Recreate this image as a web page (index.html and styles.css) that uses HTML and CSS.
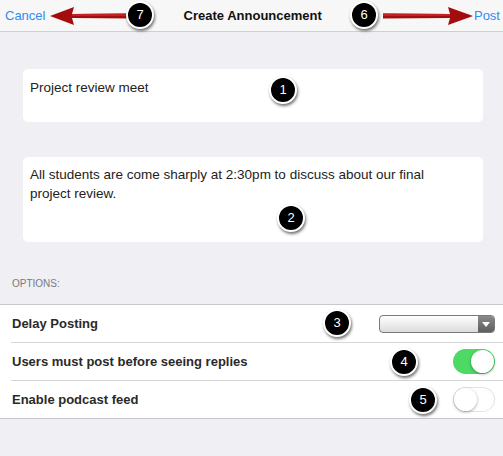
FILE: index.html
```html
<!DOCTYPE html>
<html>
<head>
<meta charset="utf-8">
<link rel="stylesheet" href="styles.css">
</head>
<body>
<div class="page">
  <header class="nav">
    <span class="nav-btn">Cancel</span>
    <span class="nav-title">Create Announcement</span>
    <span class="nav-btn">Post</span>
    <svg class="arrow arrow-left" width="80" height="20" viewBox="0 0 80 20">
      <path d="M0 10 L24 1 L22 8 L80 7.5 L80 12.5 L22 12 L24 19 Z" fill="#a30d0d"/>
      <path d="M22 8 L80 7.5 L80 10 L22 10 Z" fill="#c42020"/>
    </svg>
    <svg class="arrow arrow-right" width="90" height="20" viewBox="0 0 90 20">
      <path d="M90 10 L65 1 L67 8 L0 7.5 L0 12.5 L67 12 L65 19 Z" fill="#a30d0d"/>
      <path d="M67 8 L0 7.5 L0 10 L67 10 Z" fill="#c42020"/>
    </svg>
    <span class="badge b7">7</span>
    <span class="badge b6">6</span>
  </header>

  <main class="content">
    <div class="field field-title">
      Project review meet
      <span class="badge b1">1</span>
    </div>
    <div class="field field-body">
      All students are come sharply at 2:30pm to discuss about our final project review.
      <span class="badge b2">2</span>
    </div>

    <div class="section-label">OPTIONS:</div>
    <div class="group">
      <div class="row">
        <span class="row-label">Delay Posting</span>
        <div class="select"><span class="select-arrow"></span></div>
        <span class="badge b3">3</span>
      </div>
      <div class="row">
        <span class="row-label">Users must post before seeing replies</span>
        <div class="toggle on"><span class="knob"></span></div>
        <span class="badge b4">4</span>
      </div>
      <div class="row last">
        <span class="row-label">Enable podcast feed</span>
        <div class="toggle"><span class="knob"></span></div>
        <span class="badge b5">5</span>
      </div>
    </div>
  </main>
</div>
</body>
</html>
```

FILE: styles.css
```css
html, body {
  margin: 0;
  padding: 0;
}
body {
  font-family: "Liberation Sans", Arial, sans-serif;
  background: #efeff4;
  color: #1a1a1a;
  width: 503px;
  height: 456px;
  overflow: hidden;
}
.page {
  position: relative;
  width: 503px;
  height: 456px;
}
.nav {
  position: relative;
  height: 31px;
  background: #f7f7f7;
  border-bottom: 1px solid #d0d0d4;
  display: flex;
  align-items: center;
  justify-content: space-between;
  padding: 0 3px 0 5px;
}
.nav-btn {
  color: #2f8cf5;
  font-size: 13px;
}
.nav-title {
  font-size: 13px;
  font-weight: bold;
  color: #111;
  margin-right: 14px;
}
.arrow {
  position: absolute;
  top: 6px;
}
.arrow-left { left: 50px; }
.arrow-right { left: 383px; }

.badge {
  position: absolute;
  width: 24px;
  height: 24px;
  border-radius: 50%;
  background: #000;
  border: 2px solid #fff;
  box-shadow: 1px 2px 3px rgba(0,0,0,0.55);
  color: #fff;
  font-size: 13px;
  font-weight: normal;
  line-height: 24px;
  text-align: center;
  font-family: "Liberation Sans", Arial, sans-serif;
}
.b7 { left: 126px; top: 1px; }
.b6 { left: 350px; top: 1px; }

.content {
  padding-top: 37px;
}
.field {
  position: relative;
  margin: 0 20px 0 23px;
  background: #fff;
  border-radius: 5px;
  box-sizing: border-box;
  padding: 9px 7px;
  font-size: 13.5px;
  line-height: 19px;
  color: #222;
}
.field-title {
  height: 53px;
}
.field-body {
  margin-top: 35px;
  height: 85px;
  padding-top: 8px;
  padding-right: 40px;
}
.b1 { left: 246px; top: 7px; }
.b2 { left: 254px; top: 47px; }

.section-label {
  margin-top: 36px;
  padding-left: 12px;
  font-size: 10px;
  color: #7a7a7f;
  height: 26px;
}
.group {
  background: #fff;
  border-top: 1px solid #c8c7cc;
  border-bottom: 1px solid #c8c7cc;
}
.row {
  position: relative;
  margin-left: 11px;
  padding-right: 8px;
  height: 37px;
  display: flex;
  align-items: center;
  justify-content: space-between;
  border-bottom: 1px solid #d6d6d9;
}
.row.last {
  border-bottom: none;
}
.row-label {
  font-size: 13px;
  font-weight: bold;
  color: #2a2a2a;
  padding-left: 1px;
}
.select {
  position: relative;
  width: 114px;
  height: 16px;
  border: 1px solid #7a7a7a;
  border-radius: 4px;
  background: linear-gradient(#ffffff, #dcdcdc);
  box-sizing: content-box;
}
.select-arrow {
  position: absolute;
  right: 0;
  top: 0;
  width: 16px;
  height: 16px;
  background: linear-gradient(#8a8a8a, #5e5e5e);
  border-radius: 0 3px 3px 0;
}
.select-arrow::after {
  content: "";
  position: absolute;
  left: 4px;
  top: 6px;
  border-left: 4px solid transparent;
  border-right: 4px solid transparent;
  border-top: 5px solid #fff;
}
.toggle {
  position: relative;
  width: 42px;
  height: 25px;
  border-radius: 13px;
  background: #fff;
  box-shadow: inset 0 0 0 1px #e3e3e3;
}
.toggle.on {
  background: #4cd964;
  box-shadow: none;
}
.knob {
  position: absolute;
  top: 1px;
  left: 1px;
  width: 23px;
  height: 23px;
  border-radius: 50%;
  background: #fff;
  box-shadow: 0 1px 3px rgba(0,0,0,0.35);
}
.toggle.on .knob {
  left: 18px;
}
.b3 { left: 312px; top: 4px; }
.b4 { left: 379px; top: 5px; }
.b5 { left: 398px; top: 5px; }
```
